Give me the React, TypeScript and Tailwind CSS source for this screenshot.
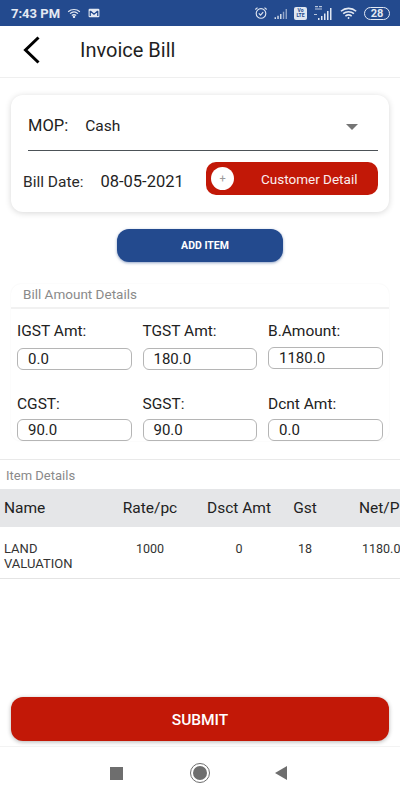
function StatusBar() {
  return (
    <div className="flex h-[26px] shrink-0 items-center bg-[#234a8e] pl-[11px] pr-[10px] text-white">
      <span className="text-[13px] font-bold leading-none text-[#e3e9f3]">7:43 PM</span>
      <svg viewBox="0 0 16 12" className="ml-[7px] h-[10px] w-[14px]" fill="none" stroke="#e3e9f3" strokeWidth="1.4">
        <path d="M1 4.5c4-3.6 10-3.6 14 0M3.2 6.8c2.8-2.4 6.8-2.4 9.600 0M5.400 9c1.500-1.200 3.700-1.200 5.200 0" />
        <circle cx="8" cy="10.600" r="0.800" fill="#e3e9f3" />
      </svg>
      <svg viewBox="0 0 14 12" className="ml-[7px] h-[10px] w-[12px]">
        <rect x="0.500" y="1" width="13" height="10" rx="1.500" fill="#e3e9f3" />
        <path d="M2.500 3.500v6M11.500 3.500v6M2.500 3.500 7 7.500l4.500-4" fill="none" stroke="#234a8e" strokeWidth="1.500" />
      </svg>
      <div className="ml-auto flex items-center">
        <svg viewBox="0 0 16 16" className="h-[14px] w-[14px]" fill="none" stroke="#dfe6f1" strokeWidth="1.300">
          <circle cx="8" cy="8.500" r="5.500" />
          <path d="M5.500 8.500 7.500 10.500 10.500 7M1.500 4 4 1.800M14.500 4 12 1.800" />
        </svg>
        <svg viewBox="0 0 16 12" className="ml-[5px] h-[11px] w-[16px]" fill="#dfe6f1">
          <path d="M1 10h1.500v2H1zM4 8.500h1.500V12H4zM7 6.500h1.500V12H7z" />
          <path d="M10 4h1.500v8H10zM13 1h1.500v11H13z" opacity="0.600" />
        </svg>
        <span className="ml-[5px] flex h-[13px] w-[13px] flex-col items-center justify-center rounded-[2px] bg-[#dfe6f1] text-[5px] font-bold leading-[5px] text-[#234a8e]">
          <span>Vo</span>
          <span>LTE</span>
        </span>
        <svg viewBox="0 0 20 16" className="ml-[6px] h-[16px] w-[20px]" fill="#dfe6f1">
          <path d="M5 13h1.500v2H5zM8 11h1.500v4H8zM11 8.500h1.500V15H11zM14 6h1.500v9H14zM17 3h1.500v12H17z" />
          <path d="M2 1h3v1.200H2zM6 1h3v1.200H6zM2 3.500h7v1H2zM1 9h3v1H1z" opacity="0.800" />
        </svg>
        <svg viewBox="0 0 20 14" className="ml-[7px] h-[13px] w-[18px]" fill="none" stroke="#e3e9f3" strokeWidth="1.800">
          <path d="M1 4.500c5-4.200 12-4.200 17 0M3.500 7.200c3.500-2.900 8.500-2.900 12 0M6 9.900c2-1.500 5-1.500 7 0" />
          <circle cx="9.500" cy="12" r="1" fill="#e3e9f3" stroke="none" />
        </svg>
        <span className="ml-[6px] flex h-[13px] w-[26px] items-center justify-center rounded-full border border-[#e3e9f3] text-[11px] font-bold leading-none text-[#e3e9f3]">
          28
        </span>
      </div>
    </div>
  );
}

function AmountField({ label, value, inputClass }: { label: string; value: string; inputClass: string }) {
  return (
    <div className="flex w-[114.500px] flex-col">
      <span className="text-[15.500px] leading-[18px] text-[#222222]">{label}</span>
      <div
        className={`flex h-[22px] items-center rounded-[6px] border border-[#b5b5b5] pl-[10px] text-[15px] leading-none text-[#222222] ${inputClass}`}
      >
        {value}
      </div>
    </div>
  );
}

const cols = ["w-[96px]", "w-[100px]", "w-[78px]", "w-[54px]", "w-[68px]"];

export default function App() {
  return (
    <div className="flex h-[800px] w-[400px] flex-col overflow-hidden bg-white font-['Roboto',sans-serif]">
      <StatusBar />

      {/* Header */}
      <div className="flex h-[52px] shrink-0 items-center border-b border-[#efefef] pb-[3px] pl-[23px]">
        <svg viewBox="0 0 17 28" className="h-[28px] w-[17px]" fill="none" stroke="black" strokeWidth="3">
          <path d="M15.500 1.500 2.500 14l13 12.500" />
        </svg>
        <span className="ml-[40px] text-[20px] leading-none text-[#1f1f1f]">Invoice Bill</span>
      </div>

      {/* Payment card */}
      <div className="mx-[11px] mt-[17px] h-[117px] shrink-0 rounded-[12px] bg-white shadow-[0_1px_6px_rgba(0,0,0,0.16)]">
        <div className="ml-[17px] mr-[11px] flex h-[56px] items-center border-b border-[#4c5257] pt-[8px]">
          <span className="text-[16.500px] text-[#222222]">MOP:</span>
          <span className="ml-[17px] text-[15.500px] text-[#222222]">Cash</span>
          <span className="ml-auto mr-[20px] h-0 w-0 border-x-[6px] border-t-[6px] border-x-transparent border-t-[#757575]" />
        </div>
        <div className="mt-[11px] flex items-center pl-[12px] pr-[11px]">
          <span className="mt-[8px] text-[15.500px] text-[#2a2a2a]">Bill Date:</span>
          <span className="ml-[17px] mt-[8px] text-[16.500px] text-[#1f1f1f]">08-05-2021</span>
          <div className="ml-auto flex h-[33px] w-[172px] items-center rounded-[10px] bg-[#c21807] pl-[5px]">
            <span className="flex h-[23px] w-[23px] items-center justify-center rounded-full bg-white text-[11px] leading-none text-[#9a9a9a]">
              +
            </span>
            <span className="ml-[27px] pt-[1px] text-[13.500px] text-[#fbeeee]">Customer Detail</span>
          </div>
        </div>
      </div>

      {/* Add item */}
      <div className="mt-[17px] flex h-[33px] w-[166px] shrink-0 items-center justify-center self-center rounded-[12px] bg-[#234a8e] pl-[10px] text-[10.500px] font-bold text-white shadow-[0_1px_3px_rgba(35,74,142,0.5)]">
        ADD ITEM
      </div>

      {/* Bill amount details */}
      <div className="mx-[11px] mt-[22px] shrink-0 rounded-[10px] shadow-[0_0_2px_rgba(0,0,0,0.06)]">
        <div className="h-[25px] border-b-2 border-[#f1f1f1] pl-[12px] text-[13.500px] leading-[21px] text-[#8a8a8a]">
          Bill Amount Details
        </div>
        <div className="flex gap-[11px] pl-[6px] pt-[13px]">
          <AmountField label="IGST Amt:" value="0.0" inputClass="mt-[8px]" />
          <AmountField label="TGST Amt:" value="180.0" inputClass="mt-[8px]" />
          <AmountField label="B.Amount:" value="1180.0" inputClass="mt-[7px]" />
        </div>
        <div className="flex gap-[11px] pl-[6px] pt-[25px]">
          <AmountField label="CGST:" value="90.0" inputClass="mt-[6px]" />
          <AmountField label="SGST:" value="90.0" inputClass="mt-[6px]" />
          <AmountField label="Dcnt Amt:" value="0.0" inputClass="mt-[6px]" />
        </div>
      </div>

      {/* Items */}
      <div className="mt-[18px] shrink-0 border-t border-[#e9e9e9] pl-[6px] pt-[8px] text-[13px] leading-[15px] text-[#8a8a8a]">
        Item Details
      </div>
      <div className="mt-[6px] flex h-[38px] shrink-0 items-center overflow-hidden bg-[#e5e6e8] pl-[4px] pt-[2px] text-[15.500px] text-[#222222]">
        <span className={`${cols[0]} shrink-0`}>Name</span>
        <span className={`${cols[1]} shrink-0 text-center`}>Rate/pc</span>
        <span className={`${cols[2]} shrink-0 text-center`}>Dsct Amt</span>
        <span className={`${cols[3]} shrink-0 text-center`}>Gst</span>
        <span className={`${cols[4]} shrink-0 whitespace-nowrap pl-[27px]`}>Net/P</span>
      </div>
      <div className="flex h-[52px] shrink-0 overflow-hidden border-b border-[#e4e4e4] pl-[4px] pt-[14px] text-[12.500px] leading-[15px] text-[#333333]">
        <span className={`${cols[0]} shrink-0 text-[13px]`}>
          LAND
          <br />
          VALUATION
        </span>
        <span className={`${cols[1]} shrink-0 text-center`}>1000</span>
        <span className={`${cols[2]} shrink-0 text-center`}>0</span>
        <span className={`${cols[3]} shrink-0 text-center`}>18</span>
        <span className={`${cols[4]} shrink-0 whitespace-nowrap pl-[30px]`}>1180.0</span>
      </div>

      {/* Footer */}
      <div className="mx-[11px] mt-auto flex h-[44px] shrink-0 items-center justify-center rounded-[12px] bg-[#c21807] pt-[3px] text-[15.500px] font-medium text-white shadow-[0_1px_4px_rgba(0,0,0,0.3)]">
        SUBMIT
      </div>
      <div className="mt-[5px] flex h-[54px] shrink-0 items-center border-t border-[#f3f3f3] pb-[1px] pl-[110px]">
        <span className="h-[13px] w-[13px] bg-[#6e6e6e]" />
        <span className="ml-[67px] flex h-[20px] w-[20px] items-center justify-center rounded-full border-[1.500px] border-[#6e6e6e]">
          <span className="h-[14px] w-[14px] rounded-full bg-[#6e6e6e]" />
        </span>
        <span className="ml-[65px] h-0 w-0 border-y-[7px] border-r-[12px] border-y-transparent border-r-[#6e6e6e]" />
      </div>
    </div>
  );
}
